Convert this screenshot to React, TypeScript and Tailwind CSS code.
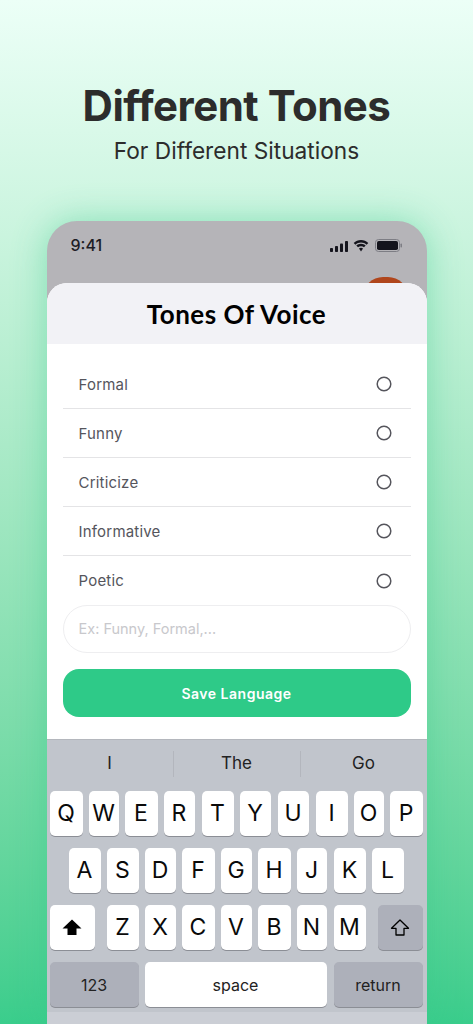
const tones = ["Formal", "Funny", "Criticize", "Informative", "Poetic"];

type K = { t: string; w: number; ml: number };
const mk = (s: string, w: number[], g: number[]): K[] => s.split("").map((t, i) => ({ t, w: w[i], ml: g[i] }));
const row1 = mk("QWERTYUIOP", [33, 30, 33, 31, 32, 31, 31, 32, 30, 33], [0, 6, 6, 6, 7, 6, 7, 7, 6, 6]);
const row2 = mk("ASDFGHJKL", [32, 32, 31, 33, 31, 33, 30, 32, 32], [0, 6, 6, 6, 6, 6, 6, 7, 6]);
const row3 = mk("ZXCVBNM", [32, 31, 33, 31, 33, 30, 32], [0, 6, 6, 6, 6, 6, 7]);

const keyBase = "h-[45px] rounded-[5px] flex items-center justify-center shadow-[0_1px_0_#8b8e95]";

function Letter({ k }: { k: K }) {
  return (
    <div
      className={`${keyBase} bg-white text-[23px] font-normal text-[#0a0a0a]`}
      style={{ width: k.w, marginLeft: k.ml }}
    >
      {k.t}
    </div>
  );
}

function StatusIcons() {
  return (
    <div className="flex items-center gap-[4px]">
      <svg width="19" height="12" viewBox="0 0 19 12" fill="#14141c">
        <rect x="0" y="8" width="3" height="4" rx="0.8" />
        <rect x="5" y="6" width="3" height="6" rx="0.8" />
        <rect x="10" y="3.5" width="3" height="8.5" rx="0.8" />
        <rect x="15" y="1" width="3" height="11" rx="0.8" />
      </svg>
      <svg width="16" height="12" viewBox="0 0 16 12" fill="#14141c">
        <path d="M8 2.6c2.200 0 4.100.8 5.600 2.200l1.700-1.800C13.400 1.100 10.800 0 8 0S2.600 1.100.700 3l1.700 1.800C3.900 3.400 5.800 2.600 8 2.600z" />
        <path d="M8 6.200c1.200 0 2.200.4 3 1.100l1.700-1.800C11.400 4.400 9.800 3.700 8 3.700s-3.400.7-4.700 1.800L5 7.300c.8-.7 1.800-1.100 3-1.100z" />
        <path d="M8 7.800c-.8 0-1.500.3-2 .8L8 11.500l2-2.900c-.5-.5-1.200-.8-2-.8z" />
      </svg>
      <svg width="27" height="13" viewBox="0 0 27 13" className="ml-[2px]">
        <rect x="0.500" y="0.500" width="24" height="12" rx="3" fill="none" stroke="#7d7d84" />
        <rect x="2" y="2" width="21" height="9" rx="1.800" fill="#14141c" />
        <rect x="25.500" y="4.500" width="1.500" height="4" rx="0.700" fill="#7d7d84" />
      </svg>
    </div>
  );
}

export default function App() {
  return (
    <div className="h-[1024px] w-[473px] overflow-hidden flex flex-col items-center bg-gradient-to-b from-[#ecfff7] to-[#3acd8c] font-['Inter',sans-serif]">
      <h1 className="mt-[80px] text-[42px] leading-[52px] font-bold tracking-[-0.5px] text-[#2c2c2c]">Different Tones</h1>
      <p className="mt-[2px] text-[22.700px] leading-[34px] text-[#2c2c2c]">For Different Situations</p>

      <div className="relative mt-[53px] w-[380px] h-[803px] shrink-0 rounded-t-[30px] bg-[#b5b4b8] shadow-[0_0_34px_rgba(50,200,135,0.45)] flex flex-col">
        <div className="h-[62px] shrink-0 pl-[24px] pr-[25px] pt-[13px] flex items-start justify-between">
          <span className="text-[16px] leading-[22px] font-medium text-[#1d1d24]">9:41</span>
          <div className="mt-[5px]"><StatusIcons /></div>
        </div>
        <div className="absolute left-[316px] top-[56px] h-[20px] w-[45px] rounded-t-[20px] bg-[#b0461c]" />

        <div className="relative flex-1 flex flex-col rounded-t-[20px] overflow-hidden bg-white">
          <div className="h-[61px] shrink-0 bg-[#f2f2f6] flex items-center justify-center">
            <h2 className="pt-[1px] text-[26px] font-bold text-black font-['Lato',sans-serif] tracking-[0.500px]">Tones Of Voice</h2>
          </div>

          <div className="h-[395px] shrink-0 px-[16px] pt-[16px] flex flex-col">
            {tones.map((t, i) => (
              <div
                key={t}
                className={`h-[49px] shrink-0 flex items-center justify-between pl-[16px] pr-[19px] ${i < 4 ? "border-b border-[#e4e4e6]" : ""}`}
              >
                <span className="text-[15px] pt-[2px] text-[#55555c] tracking-[0.200px]">{t}</span>
                <svg width="16" height="16" viewBox="0 0 16 16" fill="none" stroke="#55555c" strokeWidth="1.500">
                  <circle cx="8" cy="8" r="6.800" />
                </svg>
              </div>
            ))}
            <div className="h-[48px] shrink-0 rounded-full border border-[#eeeef0] flex items-center pl-[15px] text-[14.500px] text-[#c8c8cc]">
              Ex: Funny, Formal,...
            </div>
            <button className="mt-[16px] h-[48px] shrink-0 rounded-[16px] bg-[#2eca88] text-white text-[14px] font-semibold tracking-[0.500px]">
              Save Language
            </button>
          </div>

          <div className="flex-1 bg-[#c1c5cc] border-t border-[#b4b7bd] flex flex-col">
            <div className="h-[51px] shrink-0 pb-[3px] flex items-center text-[17px] text-[#222]">
              {["I", "The", "Go"].map((s, i) => (
                <div key={s} className={`flex-1 h-[26px] flex items-center justify-center ${i > 0 ? "border-l border-[#b3b6bd]" : ""}`}>
                  {s}
                </div>
              ))}
            </div>
            <div className="flex px-[3px]">
              {row1.map((k) => <Letter key={k.t} k={k} />)}
            </div>
            <div className="flex mt-[12px] pl-[22px]">
              {row2.map((k) => <Letter key={k.t} k={k} />)}
            </div>
            <div className="flex mt-[12px] px-[3px]">
              <div className={`${keyBase} w-[45px] bg-white`}>
                <svg width="20" height="17" viewBox="0 0 20 17" fill="#000"><path d="M10 0.500 L19.500 9.500 H14.500 V16 H5.500 V9.500 H0.500 Z" /></svg>
              </div>
              <div className="flex ml-[12px]">
                {row3.map((k) => <Letter key={k.t} k={k} />)}
              </div>
              <div className={`${keyBase} w-[45px] ml-[12px] bg-[#adb0ba]`}>
                <svg width="20" height="17" viewBox="0 0 20 17" fill="none" stroke="#000" strokeWidth="1.300"><path d="M10 1 L18.500 9.300 H14 V16 H6 V9.300 H1.500 Z" strokeLinejoin="round" /></svg>
              </div>
            </div>
            <div className="flex mt-[12px] px-[3px]">
              <div className={`${keyBase} w-[89px] bg-[#adb0ba] text-[16px] text-[#222]`}>123</div>
              <div className={`${keyBase} w-[182px] ml-[6px] bg-white text-[16px] text-[#222]`}>space</div>
              <div className={`${keyBase} w-[89px] ml-[7px] bg-[#adb0ba] text-[16px] text-[#222]`}>return</div>
            </div>
            <div className="flex-1 mt-[5px] bg-[#cbced5]" />
          </div>
        </div>
      </div>
    </div>
  );
}
